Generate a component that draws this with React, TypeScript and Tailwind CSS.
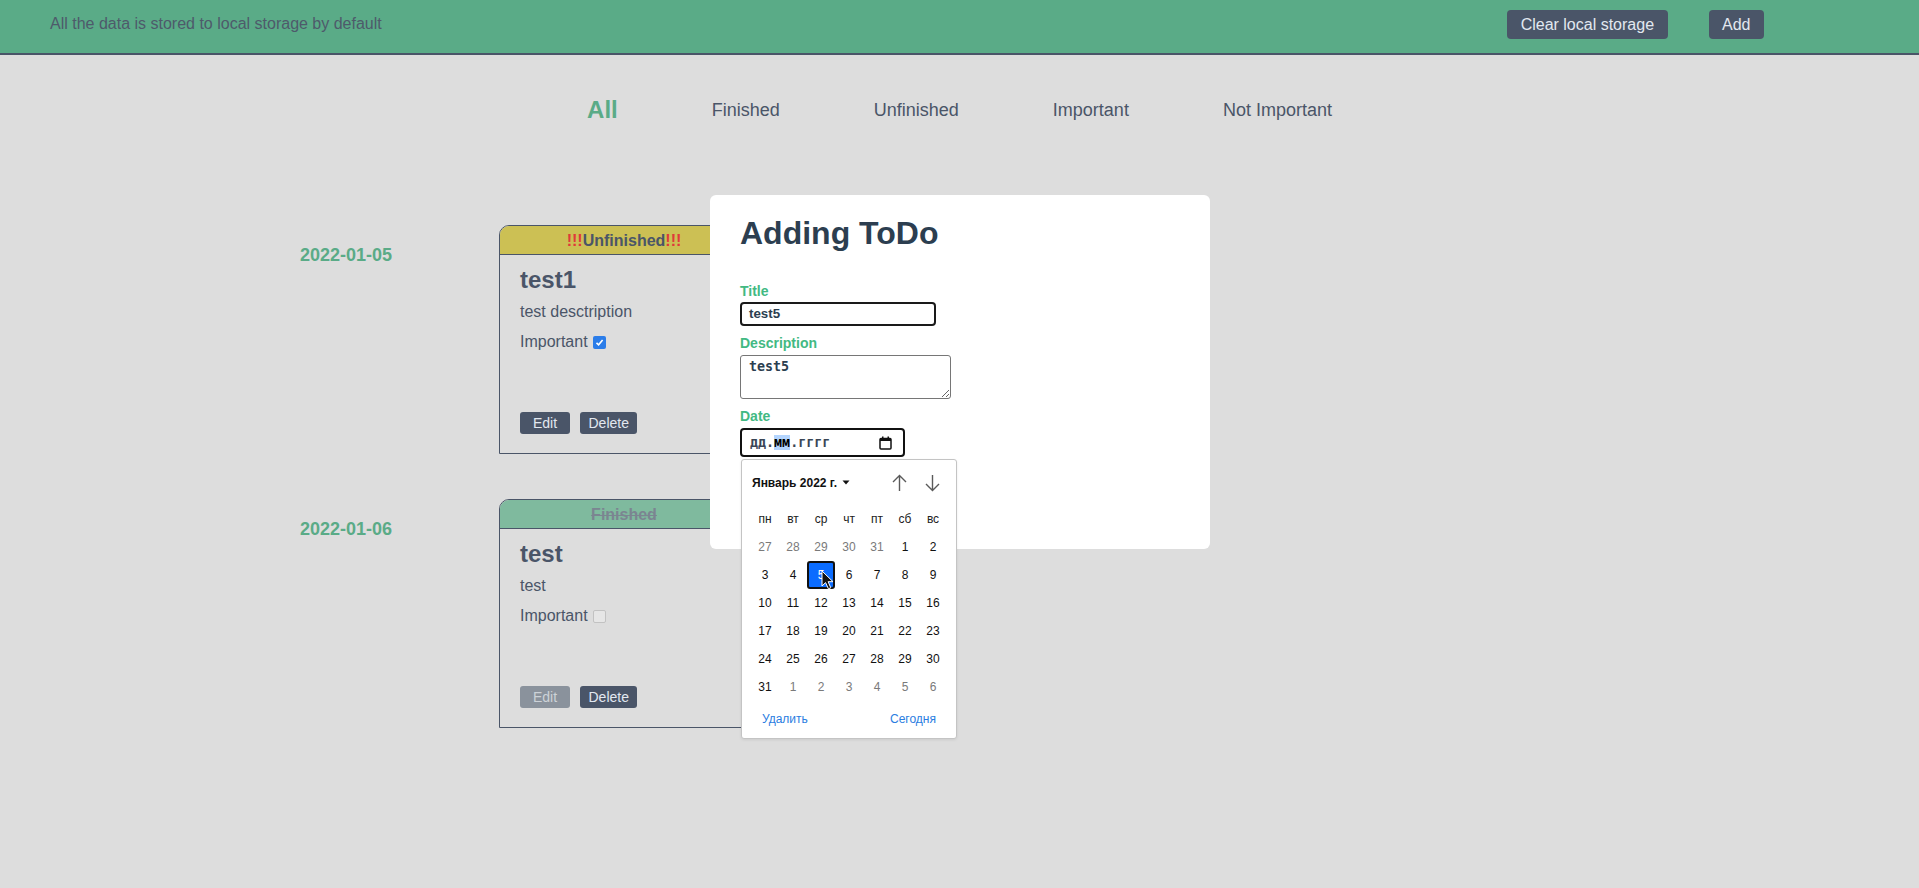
import clsx from "clsx";

type Todo = {
  date: string;
  title: string;
  description: string;
  important: boolean;
  finished: boolean;
};

const todos: Todo[] = [
  { date: "2022-01-05", title: "test1", description: "test desctription", important: true, finished: false },
  { date: "2022-01-06", title: "test", description: "test", important: false, finished: true },
];

const filters = ["All", "Finished", "Unfinished", "Important", "Not Important"];

const weekDays = ["пн", "вт", "ср", "чт", "пт", "сб", "вс"];

// january 2022 grid, starting on monday 27 dec
const calendarDays: { day: number; current: boolean }[] = [
  ...[27, 28, 29, 30, 31].map((day) => ({ day, current: false })),
  ...Array.from({ length: 31 }, (_, i) => ({ day: i + 1, current: true })),
  ...[1, 2, 3, 4, 5, 6].map((day) => ({ day, current: false })),
];

function Checkbox({ checked }: { checked: boolean }) {
  if (checked) {
    return (
      <span className="ml-[5px] inline-flex h-[13px] w-[13px] items-center justify-center rounded-[2px] bg-[#2b7de9]">
        <svg width="9" height="9" viewBox="0 0 9 9">
          <path d="M1.5 4.8 L3.6 6.8 L7.6 2" fill="none" stroke="white" strokeWidth="1.6" />
        </svg>
      </span>
    );
  }
  return (
    <span className="ml-[5px] inline-block h-[13px] w-[13px] rounded-[2px] border border-[#c2c2c2] bg-[#e6e6e6]" />
  );
}

function TodoCard({ todo }: { todo: Todo }) {
  return (
    <div className="flex h-[229px] w-[250px] flex-col rounded-t-[10px] border border-[#4a5568]">
      <div
        className={clsx(
          "h-[29px] rounded-t-[9px] border-b border-[#4a5568] pt-[1px] text-center text-[16px] font-bold leading-[27px]",
          todo.finished ? "bg-[#7fba9e] text-[#7b8591] line-through" : "bg-[#ccc054] text-[#4a5568]"
        )}
      >
        {todo.finished ? (
          "Finished"
        ) : (
          <>
            <span className="text-[#e03a3a]">!!!</span>Unfinished<span className="text-[#e03a3a]">!!!</span>
          </>
        )}
      </div>
      <div className="flex flex-1 flex-col px-[20px] pb-[19px] pt-[11px] text-[#4a5568]">
        <h2 className="text-[24px] font-bold leading-[28px]">{todo.title}</h2>
        <p className="mt-[9px] text-[16px] leading-[18px]">{todo.description}</p>
        <div className="mt-[12px] flex items-center text-[16px] leading-[18px]">
          Important
          <Checkbox checked={todo.important} />
        </div>
        <div className="mt-auto flex gap-[10px]">
          <button
            className={clsx(
              "h-[22px] min-w-[50px] rounded-[3px] px-[8.5px] text-[14px]",
              todo.finished ? "bg-[#8a929c] text-[#cdd2d8]" : "bg-[#4a5568] text-[#e2e8f0]"
            )}
          >
            Edit
          </button>
          <button className="h-[22px] min-w-[50px] rounded-[3px] bg-[#4a5568] px-[8.5px] text-[14px] text-[#e2e8f0]">
            Delete
          </button>
        </div>
      </div>
    </div>
  );
}

function DatePicker() {
  return (
    <div className="absolute left-[31px] top-[264px] h-[280px] w-[216px] rounded-[3px] border border-[#c4c4c4] bg-white px-[9px] text-[12px] shadow-[0_1px_3px_rgba(0,0,0,0.08)]">
      <div className="flex h-[45px] items-center">
        <span className="pl-[1px] font-bold text-[#111]">Январь 2022 г.</span>
        <svg className="ml-[5px]" width="8" height="5" viewBox="0 0 8 5">
          <path d="M0.5 0.5 L7.5 0.5 L4 4.5 Z" fill="#111" />
        </svg>
        <div className="ml-auto mr-[7px] flex gap-[18px]">
          <svg width="15" height="18" viewBox="0 0 15 18">
            <path d="M7.5 1.5 V17 M1 8 L7.5 1.5 L14 8" fill="none" stroke="#5a5a5a" strokeWidth="1.4" />
          </svg>
          <svg width="15" height="18" viewBox="0 0 15 18">
            <path d="M7.5 1 V16.5 M1 10 L7.5 16.5 L14 10" fill="none" stroke="#5a5a5a" strokeWidth="1.4" />
          </svg>
        </div>
      </div>
      <div className="grid grid-cols-7">
        {weekDays.map((d) => (
          <div key={d} className="flex h-[28px] items-center justify-center text-[#222]">
            {d}
          </div>
        ))}
        {calendarDays.map((d, i) => (
          <div key={i} className="flex h-[28px] items-center justify-center">
            {d.current && d.day === 5 ? (
              <span className="flex h-[28px] w-[28px] items-center justify-center rounded-[3px] border-2 border-[#111] bg-[#0b6cff] text-white">
                {d.day}
              </span>
            ) : (
              <span className={d.current ? "text-[#111]" : "text-[#7a7a7a]"}>{d.day}</span>
            )}
          </div>
        ))}
      </div>
      <div className="flex h-[36px] items-center justify-between px-[11px] text-[#2a7de1]">
        <span>Удалить</span>
        <span>Сегодня</span>
      </div>
      <svg className="absolute left-[79px] top-[110px]" width="13" height="20" viewBox="0 0 13 20">
        <path
          d="M1 1 L1 16 L4.6 12.6 L7.4 18.8 L9.8 17.8 L7.1 11.7 L12 11.7 Z"
          fill="#111"
          stroke="white"
          strokeWidth="1"
          strokeLinejoin="round"
        />
      </svg>
    </div>
  );
}

function AddingModal() {
  return (
    <div className="absolute left-[710px] top-[195px] h-[354px] w-[500px] rounded-[6px] bg-white pl-[30px] pt-[20px]">
      <h1 className="text-[32px] font-bold leading-[37px] text-[#2c3e50]">Adding ToDo</h1>
      <label className="mt-[31px] block text-[14px] font-bold leading-[16px] text-[#42b983]">Title</label>
      <div className="mt-[3px] flex h-[24px] w-[196px] items-center rounded-[4px] border-2 border-[#1a1a1a] pl-[7px] text-[13.33px] font-bold text-[#2c3e50]">
        test5
      </div>
      <label className="mt-[9px] block text-[14px] font-bold leading-[16px] text-[#42b983]">Description</label>
      <textarea
        readOnly
        defaultValue="test5"
        className="mt-[4px] block h-[44px] w-[211px] rounded-[3px] border border-[#767676] px-[8px] pt-[3px] font-['DejaVu_Sans_Mono',monospace] text-[13.33px] font-bold leading-[16px] text-[#2c3e50] outline-none"
      />
      <label className="mt-[9px] block text-[14px] font-bold leading-[16px] text-[#42b983]">Date</label>
      <div className="mt-[4px] flex h-[29px] w-[165px] items-center rounded-[4px] border-2 border-[#111] pl-[8px] pr-[11px]">
        <span className="font-['DejaVu_Sans_Mono',monospace] text-[13.33px] font-bold text-[#3b4656]">
          дд.<span className="bg-[#b4d5fe] text-black">мм</span>.гггг
        </span>
        <svg className="ml-auto" width="13" height="14" viewBox="0 0 13 14">
          <rect x="1" y="2.5" width="11" height="10.5" rx="1" fill="none" stroke="#111" strokeWidth="1.5" />
          <rect x="1" y="2.5" width="11" height="2.5" fill="#111" />
          <rect x="3" y="0.5" width="1.5" height="3" fill="#111" />
          <rect x="8.5" y="0.5" width="1.5" height="3" fill="#111" />
        </svg>
      </div>
      <DatePicker />
    </div>
  );
}

export default function App() {
  return (
    <div className="relative min-h-screen bg-[#dddddd] font-['Liberation_Sans',Arial,sans-serif]">
      <header className="flex h-[55px] items-start border-b-2 border-[#4a5568] bg-[#5aab87] pl-[50px] pr-[155px] pt-[10px]">
        <p className="text-[16px] leading-[27px] text-[#4e5a6b]">All the data is stored to local storage by default</p>
        <div className="ml-auto flex gap-[41px]">
          <button className="h-[29px] rounded-[4px] bg-[#4a5568] px-[13.5px] text-[16px] text-[#e2e8f0]">
            Clear local storage
          </button>
          <button className="h-[29px] rounded-[4px] bg-[#4a5568] px-[13.5px] text-[16px] text-[#e2e8f0]">
            Add
          </button>
        </div>
      </header>

      <nav className="mt-[25px] flex h-[60px] items-center justify-center gap-[94px]">
        {filters.map((f) => (
          <span
            key={f}
            className={clsx(
              f === "All" ? "text-[24px] font-bold text-[#5aab87]" : "text-[18px] text-[#4a5568]"
            )}
          >
            {f}
          </span>
        ))}
      </nav>

      <main className="mt-[85px] flex flex-col gap-[45px] pl-[300px] pb-[40px]">
        {todos.map((todo) => (
          <div key={todo.date} className="flex">
            <div className="w-[199px] pt-[20px] text-[18px] font-bold leading-[21px] text-[#5aab87]">{todo.date}</div>
            <TodoCard todo={todo} />
          </div>
        ))}
      </main>

      <AddingModal />
    </div>
  );
}
